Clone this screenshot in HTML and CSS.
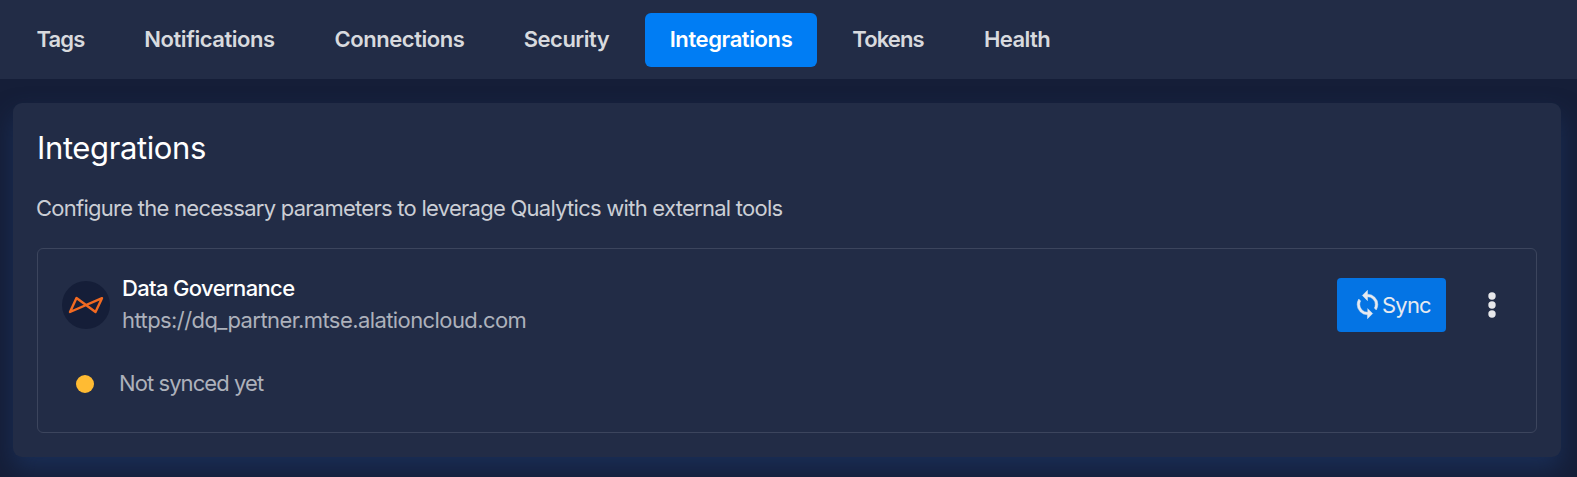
FILE: index.html
```
<!DOCTYPE html>
<html lang="en">
<head>
<meta charset="utf-8">
<title>Integrations</title>
<link rel="stylesheet" href="styles.css">
</head>
<body>
<nav class="tabs">
  <a class="tab tab-tags">Tags</a>
  <a class="tab tab-notifications">Notifications</a>
  <a class="tab tab-connections">Connections</a>
  <a class="tab tab-security">Security</a>
  <a class="tab tab-integrations active">Integrations</a>
  <a class="tab tab-tokens">Tokens</a>
  <a class="tab tab-health">Health</a>
</nav>
<main class="page">
  <section class="card">
    <h1 class="title"><span>Integrations</span></h1>
    <p class="description"><span>Configure the necessary parameters to leverage Qualytics with external tools</span></p>
    <div class="integration">
      <div class="summary">
        <div class="avatar">
          <svg class="logo" viewBox="0 0 36 18" fill="none" stroke="#f26a21" stroke-width="2.4" stroke-linejoin="round"><path d="M2 16 8.5 2 27.5 16 34 2.2Z"/></svg>
        </div>
        <div class="details">
          <div class="name"><span>Data Governance</span></div>
          <div class="url"><span>https://dq_partner.mtse.alationcloud.com</span></div>
        </div>
        <button class="sync">
          <svg class="sync-icon" viewBox="0 0 24 24" fill="currentColor" stroke="currentColor" stroke-width=".35"><path d="M12 18a6 6 0 0 1-6-6c0-1 .25-1.97.7-2.8L5.24 7.74A7.93 7.93 0 0 0 4 12a8 8 0 0 0 8 8v3l4-4-4-4m0-11V1L8 5l4 4V6a6 6 0 0 1 6 6c0 1-.25 1.97-.7 2.8l1.46 1.46A7.93 7.93 0 0 0 20 12a8 8 0 0 0-8-8Z"/></svg>
          <span>Sync</span>
        </button>
        <button class="more" aria-label="More">
          <svg class="more-icon" viewBox="0 0 8 26" fill="currentColor"><circle cx="4" cy="4" r="3.7"/><circle cx="4" cy="13" r="3.7"/><circle cx="4" cy="22" r="3.7"/></svg>
        </button>
      </div>
      <div class="status"><i class="dot"></i><span>Not synced yet</span></div>
    </div>
  </section>
</main>
</body>
</html>
```
FILE: styles.css
```
* { box-sizing: border-box; }
body {
  margin: 0;
  height: 477px;
  overflow: hidden;
  background: #151e38;
  color: #cbced5;
  font-family: Inter, "Liberation Sans", sans-serif;
  font-size: 22px;
  white-space: nowrap;
}
.tabs {
  height: 79px;
  padding: 13px;
  display: flex;
  gap: 12px;
  background: #222c46;
}
.tab {
  height: 54px;
  padding-bottom: 2px;
  display: flex;
  align-items: center;
  justify-content: center;
  border-radius: 6px;
  color: #d8dade;
  font-weight: 600;
  letter-spacing: -0.6px;
}
.tab-tags { width: 95px; letter-spacing: -0.9px; }
.tab-notifications { width: 179px; letter-spacing: -0.45px; }
.tab-connections { width: 177px; letter-spacing: -0.45px; }
.tab-security { width: 133px; letter-spacing: -0.5px; }
.tab-integrations { width: 172px; letter-spacing: -0.4px; }
.tab-tokens { width: 118px; letter-spacing: -0.9px; }
.tab-health { width: 116px; }
.active { background: #007df4; color: #fff; }
.page { padding: 24px 16px 0 13px; }
.card {
  height: 354px;
  padding: 24px;
  border-radius: 9px;
  background: #222c46;
  box-shadow: 0 12px 24px rgba(30, 58, 110, .55);
}
.title {
  margin: 0;
  color: #fff;
  font-size: 31px;
  font-weight: 400;
  line-height: 42px;
  letter-spacing: -0.38px;
}
.description {
  margin: 23px 0 0;
  line-height: 32px;
  letter-spacing: -0.735px;
}
.description span { margin-left: -1px; }
.integration {
  height: 185px;
  margin-top: 24px;
  padding: 23px 24px;
  border: 1px solid #3c455d;
  border-radius: 6px;
}
.summary { display: flex; align-items: center; height: 65px; }
.avatar {
  width: 48px;
  height: 48px;
  display: grid;
  place-items: center;
  border-radius: 50%;
  background: #151e38;
}
.logo { width: 36px; height: 18px; }
.details { flex: 1; margin-left: 12px; padding-bottom: 2px; line-height: 32px; }
.name { color: #fff; font-weight: 500; letter-spacing: -0.65px; }
.url { color: #adb1bb; letter-spacing: -0.58px; }
.sync {
  width: 109px;
  height: 54px;
  padding: 0 0 0 15px;
  display: flex;
  align-items: center;
  border: 0;
  border-radius: 4px;
  background: #0474e4;
  color: #e7eaf0;
  font: inherit;
  letter-spacing: -0.8px;
}
.sync-icon { width: 31px; height: 31px; margin-right: -1px; }
.more {
  width: 54px;
  height: 54px;
  margin: 0 -7px 0 19px;
  padding: 0;
  display: grid;
  place-items: center;
  border: 0;
  background: none;
  color: #e7e8eb;
}
.more-icon { width: 8px; height: 26px; }
.status {
  height: 32px;
  margin-top: 31px;
  padding-left: 14px;
  display: flex;
  align-items: center;
  color: #adb1bb;
  letter-spacing: -0.92px;
}
.status span { margin-top: -2px; }
.dot {
  width: 18px;
  height: 18px;
  margin-right: 25px;
  border-radius: 50%;
  background: #ffbb33;
}
```
